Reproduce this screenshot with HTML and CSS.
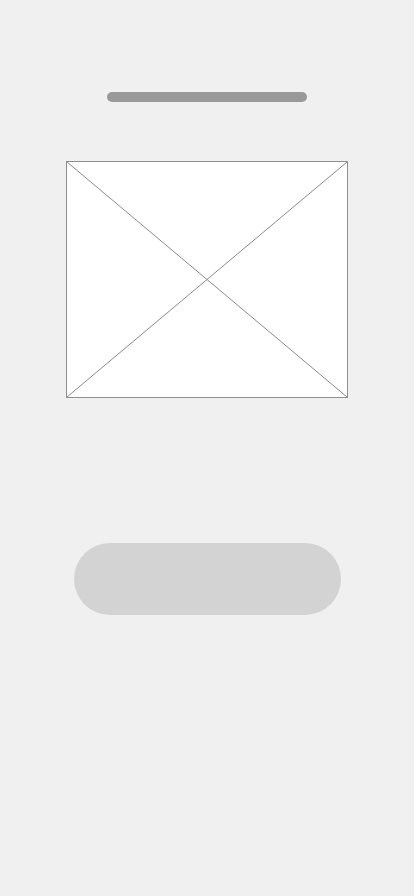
FILE: index.html
```html
<!DOCTYPE html>
<html>
<head>
<meta charset="utf-8">
<link rel="stylesheet" href="styles.css">
</head>
<body>
<main class="screen">
  <div class="title-bar"></div>
  <div class="placeholder">
    <svg class="cross" viewBox="0 0 280 235" preserveAspectRatio="none">
      <line x1="0" y1="0" x2="280" y2="235" />
      <line x1="280" y1="0" x2="0" y2="235" />
    </svg>
  </div>
  <div class="button"></div>
</main>
</body>
</html>
```
FILE: styles.css
```css
html, body {
  margin: 0;
  padding: 0;
  background: #f0f0f0;
  font-family: "Liberation Sans", Arial, sans-serif;
}
.screen {
  width: 414px;
  height: 896px;
  display: flex;
  flex-direction: column;
  align-items: center;
  box-sizing: border-box;
  padding-top: 92px;
}
.title-bar {
  width: 200px;
  height: 10px;
  border-radius: 5px;
  background: #999999;
}
.placeholder {
  margin-top: 59px;
  width: 280px;
  height: 235px;
  border: 1px solid #8f8f8f;
  background: #ffffff;
}
.cross {
  display: block;
  width: 100%;
  height: 100%;
}
.cross line {
  stroke: #8a8a8a;
  stroke-width: 1;
  vector-effect: non-scaling-stroke;
}
.button {
  margin-top: 145px;
  width: 267px;
  height: 72px;
  border-radius: 36px;
  background: #d3d3d3;
}
```
